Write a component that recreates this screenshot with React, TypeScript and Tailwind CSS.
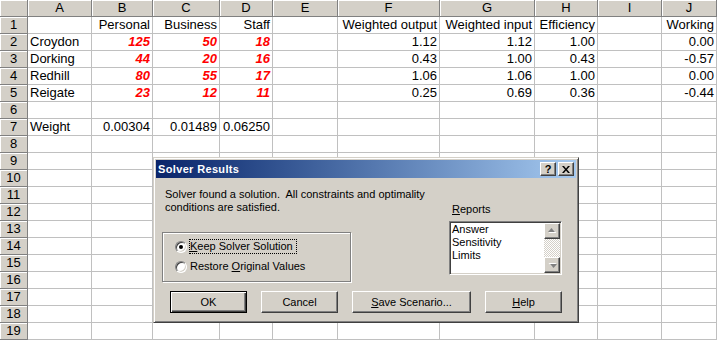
import React from 'react';

const colLetters = ['A', 'B', 'C', 'D', 'E', 'F', 'G', 'H', 'I', 'J'];

// sheet contents, rows 1..19, columns A..J
const data: string[][] = [
  ['', 'Personal', 'Business', 'Staff', '', 'Weighted output', 'Weighted input', 'Efficiency', '', 'Working'],
  ['Croydon', '125', '50', '18', '', '1.12', '1.12', '1.00', '', '0.00'],
  ['Dorking', '44', '20', '16', '', '0.43', '1.00', '0.43', '', '-0.57'],
  ['Redhill', '80', '55', '17', '', '1.06', '1.06', '1.00', '', '0.00'],
  ['Reigate', '23', '12', '11', '', '0.25', '0.69', '0.36', '', '-0.44'],
  [],
  ['Weight', '0.00304', '0.01489', '0.06250'],
];

const bevel =
  'border border-t-white border-l-white border-r-[#404040] border-b-[#404040] shadow-[inset_-1px_-1px_0_#808080] bg-[#d4d0c8]';

function HeaderCell({ children }: { children?: React.ReactNode }) {
  return (
    <div className="bg-[#d4d0c8] border-r border-b border-[#808080] shadow-[inset_1px_1px_0_#ffffff] text-center text-[13px] leading-[16px]">
      {children}
    </div>
  );
}

function Radio({ checked }: { checked?: boolean }) {
  return (
    <div className="w-[12px] h-[12px] shrink-0 rounded-full bg-white border border-t-[#808080] border-l-[#808080] border-r-white border-b-white shadow-[inset_1px_1px_0_#404040,inset_-1px_-1px_0_#d4d0c8] flex items-center justify-center">
      {checked && <div className="w-[4px] h-[4px] rounded-full bg-black" />}
    </div>
  );
}

function Arrow({ down }: { down?: boolean }) {
  return (
    <svg width="9" height="6" viewBox="0 0 9 6" className={down ? 'rotate-180' : ''}>
      <path d="M4.5 1 8.5 5H.5z" fill="#fff" />
      <path d="M3.5 0 7 4H0z" fill="#808080" />
    </svg>
  );
}

function Button({ children, w, isDefault }: { children: React.ReactNode; w: string; isDefault?: boolean }) {
  const cls = isDefault
    ? 'border border-black bg-[#d4d0c8] shadow-[inset_1px_1px_0_#fff,inset_-1px_-1px_0_#404040,inset_-2px_-2px_0_#808080]'
    : bevel;
  return <div className={`${w} h-[22px] flex items-center justify-center ${cls}`}>{children}</div>;
}

export default function App() {
  return (
    <div className="relative w-[718px] h-[340px] overflow-hidden bg-white text-black font-['Liberation_Sans',Arial,sans-serif]">
      {/* spreadsheet */}
      <div className="grid grid-cols-[28px_64px_61px_67px_53px_65px_102px_95px_63px_64px_55px] auto-rows-[17px]">
        <HeaderCell />
        {colLetters.map((c) => (
          <HeaderCell key={c}>{c}</HeaderCell>
        ))}
        {Array.from({ length: 19 }, (_, r) => (
          <React.Fragment key={r}>
            <HeaderCell>{r + 1}</HeaderCell>
            {colLetters.map((_, c) => {
              const v = data[r]?.[c] ?? '';
              const red = r >= 1 && r <= 4 && c >= 1 && c <= 3;
              return (
                <div
                  key={c}
                  className={`border-r border-b border-[#c0c0c0] px-[2px] text-[13px] leading-[16px] whitespace-nowrap ${
                    c === 0 ? 'text-left' : 'text-right'
                  } ${red ? 'font-bold italic text-[#ff0000]' : ''}`}
                >
                  {v}
                </div>
              );
            })}
          </React.Fragment>
        ))}
      </div>

      {/* Solver Results dialog */}
      <div className="absolute left-[153px] top-[157px] w-[426px] h-[166px] bg-[#d4d0c8] border border-t-[#d4d0c8] border-l-[#d4d0c8] border-r-[#404040] border-b-[#404040] shadow-[inset_1px_1px_0_#fff,inset_-1px_-1px_0_#808080] p-[2px] text-[11px] leading-[13px]">
        <div className="h-[18px] flex items-center justify-between bg-linear-to-r from-[#0a246a] to-[#a6caf0] pl-[2px] pr-[2px]">
          <span className="font-bold text-white tracking-[0.35px]">Solver Results</span>
          <div className="flex gap-[2px]">
            <div className={`w-[16px] h-[14px] flex items-center justify-center font-bold text-[11px] leading-none ${bevel}`}>?</div>
            <div className={`w-[16px] h-[14px] flex items-center justify-center ${bevel}`}>
              <svg width="8" height="7" viewBox="0 0 8 7">
                <path d="M0 0h2l2 2.5L6 0h2L5 3.5 8 7H6L4 4.5 2 7H0l3-3.5z" fill="#000" />
              </svg>
            </div>
          </div>
        </div>

        <div className="flex">
          <div className="w-[293px] pl-[6px]">
            <p className="ml-[3px] mt-[10px] whitespace-pre">{`Solver found a solution.  All constraints and optimality\nconditions are satisfied.`}</p>
            <div className="mt-[18px] w-[189px] h-[50px] border border-[#808080] shadow-[inset_1px_1px_0_#fff,1px_1px_0_#fff] pt-[6px] pl-[12px] flex flex-col gap-[5px]">
              <div className="flex items-center">
                <Radio checked />
                <span className="ml-[2px] pr-[3px] border border-dotted border-black">
                  <u>K</u>eep Solver Solution
                </span>
              </div>
              <div className="flex items-center">
                <Radio />
                <span className="ml-[2px] border border-transparent">
                  Restore <u>O</u>riginal Values
                </span>
              </div>
            </div>
          </div>

          <div className="pt-[25px]">
            <div className="pl-[3px]">
              <u>R</u>eports
            </div>
            <div className="mt-[5px] w-[113px] h-[54px] flex bg-white border border-t-[#808080] border-l-[#808080] border-r-white border-b-white shadow-[inset_1px_1px_0_#404040,inset_-1px_-1px_0_#d4d0c8] p-[1px]">
              <div className="flex-1 pl-[1px]">
                <div>Answer</div>
                <div>Sensitivity</div>
                <div>Limits</div>
              </div>
              <div className="w-[16px] flex flex-col">
                <div className={`h-[16px] flex items-center justify-center ${bevel}`}>
                  <Arrow />
                </div>
                <div className="flex-1 bg-[image:repeating-conic-gradient(#d4d0c8_0_25%,#ffffff_0_50%)] bg-size-[2px_2px]" />
                <div className={`h-[16px] flex items-center justify-center ${bevel}`}>
                  <Arrow down />
                </div>
              </div>
            </div>
          </div>
        </div>

        <div className="flex gap-[14px] pl-[14px] mt-[9px]">
          <Button w="w-[77px]" isDefault>
            OK
          </Button>
          <Button w="w-[77px]">Cancel</Button>
          <Button w="w-[119px]">
            <span>
              <u>S</u>ave Scenario...
            </span>
          </Button>
          <Button w="w-[77px]">
            <span>
              <u>H</u>elp
            </span>
          </Button>
        </div>
      </div>
    </div>
  );
}
